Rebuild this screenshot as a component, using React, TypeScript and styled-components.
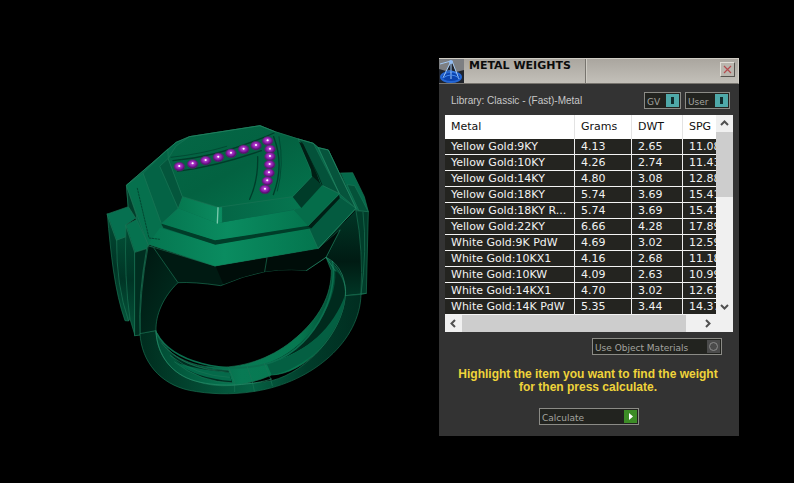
import React from "react";
import styled, { createGlobalStyle } from "styled-components";

const GlobalStyle = createGlobalStyle`
  * { box-sizing: border-box; }
  body { margin: 0; background: #000; font-family: "DejaVu Sans", Verdana, sans-serif; font-size: 11px; }
`;

const Screen = styled.main`
  display: grid;
  grid-template-columns: minmax(0, 1fr) minmax(280px, 300px);
  align-items: start;
  min-height: 100vh;
  padding: 58px 55px 47px 0;
  background: #000;
`;

const Viewport = styled.section`
  display: flex;
  justify-content: center;
  padding: 57px 0 0 36px;
`;

const RingDrawing = styled.svg`
  display: block;
  width: 275px;
  max-width: 100%;
  height: auto;
`;

const Panel = styled.section`
  display: flex;
  flex-direction: column;
  background: #333;
`;

const TitleBar = styled.header`
  display: flex;
  height: 26px;
  border: 1px solid #cfccc4;
  border-bottom-color: #77746e;
  border-left: 0;
  background: linear-gradient(#aaa69f, #c3c0b9);
`;

const Logo = styled.svg`
  flex: none;
  width: 25px;
  height: 24px;
`;

const Title = styled.h1`
  flex: none;
  width: 122px;
  margin: 0;
  padding-left: 5px;
  border-right: 1px solid #77746e;
  color: #0c0c0c;
  font-size: 11px;
  font-weight: bold;
  line-height: 13px;
  white-space: nowrap;
`;

const TitleSpace = styled.div`
  display: flex;
  flex: 1;
  align-items: center;
  justify-content: flex-end;
  padding: 0 3px 3px 0;
  border-left: 1px solid #cfccc4;
`;

const CloseButton = styled.button`
  display: grid;
  place-items: center;
  width: 15px;
  height: 15px;
  padding: 0;
  border: 1px solid;
  border-color: #e2dfd8 #57544f #57544f #e2dfd8;
  background: #bab6ae;
`;

const LibraryRow = styled.div`
  display: flex;
  align-items: center;
  gap: 4px;
  padding: 8px 9px 6px 12px;
`;

const Library = styled.span`
  flex: 1;
  color: #c8c8c8;
  font: 10px/16px "Liberation Sans", Arial, sans-serif;
  white-space: nowrap;
`;

const Option = styled.label<{ $width: number }>`
  display: flex;
  align-items: center;
  justify-content: space-between;
  width: ${(p) => p.$width}px;
  height: 17px;
  padding: 0 1px 0 2px;
  border: 1px solid #8b8b86;
  background: #22231f;
  color: #a3a39f;
  font-size: 9px;
  white-space: nowrap;
`;

const ControlText = styled.span`
  padding-top: 2px;
`;

const Tick = styled.input`
  display: grid;
  place-items: center;
  flex: none;
  appearance: none;
  width: 13px;
  height: 13px;
  margin: 0;
  background: #4b4b4b;

  &::before {
    content: "";
    width: 7px;
    height: 7px;
    border: 1px solid #8b8b8b;
    border-radius: 50%;
  }

  &:checked {
    background: #4fa9a9;
  }

  &:checked::before {
    width: 3px;
    height: 7px;
    border: 0;
    border-radius: 0;
    background: #102c2c;
  }
`;

const ListBox = styled.div`
  display: grid;
  grid-template-columns: minmax(0, 1fr) 17px;
  margin: 0 6px;
  background: #f0f0f0;
`;

const TableClip = styled.div`
  overflow: hidden;
`;

const Table = styled.table`
  width: 100%;
  table-layout: fixed;
  border-collapse: separate;
  border-spacing: 0;
  color: #f2f2f2;
  font-size: 11px;
`;

const HeadCell = styled.th<{ $width?: number }>`
  width: ${(p) => (p.$width ? `${p.$width}px` : "auto")};
  height: 24px;
  padding: 0 0 0 6px;
  border-right: 1px solid #e3e3e3;
  background: #fff;
  color: #111;
  font-weight: normal;
  line-height: 16px;
  text-align: left;

  &:last-child {
    border-right: 0;
  }
`;

const Cell = styled.td`
  height: 16px;
  padding: 1px 0 0 6px;
  border-right: 1px solid #eee;
  border-bottom: 1px solid #f4f4f4;
  background: #242420;
  line-height: 14px;
  white-space: nowrap;
  overflow: hidden;

  &:last-child {
    border-right: 0;
  }
`;

const VerticalBar = styled.div`
  display: grid;
  grid-template-rows: 17px 65px 1fr 17px;
`;

const HorizontalBar = styled.div`
  display: grid;
  grid-column: 1 / -1;
  grid-template-columns: 17px minmax(0, 1fr) 13px 17px 17px;
  height: 17px;
`;

const Thumb = styled.div`
  background: #cdcdcd;
`;

const ArrowButton = styled.button`
  display: grid;
  place-items: center;
  padding: 0;
  border: 0;
  background: transparent;
`;

const MaterialsRow = styled.div`
  display: flex;
  justify-content: flex-end;
  padding: 6px 17px 0;
`;

const Hint = styled.p`
  margin: 13px 0 12px;
  padding: 0 16px 0 14px;
  color: #efd43a;
  font: bold 12px/13px "Liberation Sans", Arial, sans-serif;
  text-align: center;
`;

const CalculateButton = styled.button`
  display: flex;
  align-items: center;
  justify-content: space-between;
  align-self: center;
  width: 100px;
  height: 17px;
  margin: 2px 0 11px;
  padding: 0 1px 0 2px;
  border: 1px solid #8b8b86;
  background: #22231f;
  color: #a3a39f;
  font: 9px "DejaVu Sans", Verdana, sans-serif;
`;

const metals = [
  ["Yellow Gold:9KY", "4.13", "2.65", "11.08"],
  ["Yellow Gold:10KY", "4.26", "2.74", "11.43"],
  ["Yellow Gold:14KY", "4.80", "3.08", "12.88"],
  ["Yellow Gold:18KY", "5.74", "3.69", "15.41"],
  ["Yellow Gold:18KY R...", "5.74", "3.69", "15.41"],
  ["Yellow Gold:22KY", "6.66", "4.28", "17.89"],
  ["White Gold:9K PdW", "4.69", "3.02", "12.59"],
  ["White Gold:10KX1", "4.16", "2.68", "11.18"],
  ["White Gold:10KW", "4.09", "2.63", "10.99"],
  ["White Gold:14KX1", "4.70", "3.02", "12.61"],
  ["White Gold:14K PdW", "5.35", "3.44", "14.37"],
];

const gems = [
  [238, 155], [278, 147], [317, 137], [355, 127], [393, 115], [431, 103], [468, 92],
  [503, 78], [510, 103], [510, 125], [509, 149], [507, 174], [502, 198], [495, 223],
];

const Chevron = ({ d }: { d: string }) => (
  <svg width="9" height="9" viewBox="0 0 9 9" fill="none" stroke="#505050" strokeWidth="2" aria-hidden="true">
    <path d={d} />
  </svg>
);

const Ring = () => (
  <RingDrawing viewBox="0 0 825 855" role="img" aria-label="Ring model">
    <defs>
      <linearGradient id="tableFace" x1="0" x2="1" y1="0" y2="1">
        <stop offset="0" stopColor="#046746" />
        <stop offset=".5" stopColor="#036241" />
        <stop offset="1" stopColor="#04754e" />
      </linearGradient>
      <linearGradient id="bevelFace" x1="0" x2="1">
        <stop offset="0" stopColor="#05784f" />
        <stop offset=".35" stopColor="#0b8b60" />
        <stop offset=".36" stopColor="#046646" />
        <stop offset="1" stopColor="#067650" />
      </linearGradient>
      <linearGradient id="lowerFace" x1="0" x2="1">
        <stop offset="0" stopColor="#057650" />
        <stop offset=".45" stopColor="#0a8c60" />
        <stop offset="1" stopColor="#04754e" />
      </linearGradient>
      <linearGradient id="leftLeg" x1="0" x2="1" y1="0" y2="1">
        <stop offset="0" stopColor="#00150f" />
        <stop offset="1" stopColor="#003021" />
      </linearGradient>
      <linearGradient id="rightLeg" x1="0" x2="0" y1="0" y2="1">
        <stop offset="0" stopColor="#013626" />
        <stop offset=".6" stopColor="#001b13" />
        <stop offset="1" stopColor="#003625" />
      </linearGradient>
      <linearGradient id="outerBand" x1="0" x2="1">
        <stop offset="0" stopColor="#002c1e" />
        <stop offset=".5" stopColor="#056143" />
        <stop offset=".75" stopColor="#013c2a" />
        <stop offset="1" stopColor="#002d20" />
      </linearGradient>
      <linearGradient id="innerBand" x1="0" x2="1">
        <stop offset="0" stopColor="#014c34" />
        <stop offset=".45" stopColor="#087a54" />
        <stop offset=".75" stopColor="#067850" />
        <stop offset="1" stopColor="#00402c" />
      </linearGradient>
      <linearGradient id="sideStep" x1="0" x2="0" y1="0" y2="1">
        <stop offset="0" stopColor="#024c34" />
        <stop offset=".5" stopColor="#003425" />
        <stop offset="1" stopColor="#05543a" />
      </linearGradient>
      <radialGradient id="gem" cx=".47" cy=".42" r=".6">
        <stop offset="0" stopColor="#f3b2ff" />
        <stop offset=".2" stopColor="#b640cf" />
        <stop offset=".6" stopColor="#811aa1" />
        <stop offset="1" stopColor="#390850" />
      </radialGradient>
    </defs>

    <g stroke="#1a7455" strokeWidth="2" strokeLinejoin="round" strokeLinecap="round">
      {/* right shoulder and leg */}
      <path fill="#05694a" d="M722 174L758 173L793 245L805 290L768 285Z" />
      <path fill="#045239" d="M742 209L764 212L805 290L778 288Z" />
      <path fill="url(#rightLeg)" stroke="none" d="M655 400L768 285L785 345L783 538L736 542Q730 475 678 427Z" />
      <path fill="#013d2a" d="M768 287L805 290L799 535L783 538Q790 405 768 287Z" />
      <path fill="none" d="M799 535L736 542M789 292Q802 405 783 538" />

      {/* underside of the head */}
      <path fill="#001a12" d="M145 392L345 453L655 400L720 345L678 427L620 466L575 464Q537 463 494 470Q430 482 362 512Q280 500 234 503Z" />
      <path fill="#000d09" stroke="none" d="M347 454L655 400L720 345L678 427L620 466L575 464Q537 463 494 470Q430 482 370 508Z" />
      <path fill="none" d="M501 428L494 470M678 427L720 345" />

      {/* left leg */}
      <path fill="url(#leftLeg)" d="M142 392L160 397L234 503C190 545 166 600 168 648L105 662Z" />
      <path fill="none" d="M145 390Q118 535 120 660" />

      {/* stepped left shoulder */}
      <path fill="url(#sideStep)" d="M22 297L50 375Q54 520 86 618L75 617C44 530 32 414 22 297Z" />
      <path fill="url(#sideStep)" d="M50 375L80 364Q78 500 90 610L86 618Q48 511 50 375Z" />
      <path fill="#067050" d="M22 297L85 275L112 306L78 329L80 364L50 375Z" />
      <path fill="url(#sideStep)" d="M78 330L105 412L105 662L90 612Q72 492 78 330Z" />
      <path fill="#06724f" d="M78 330L113 311L145 388L140 401L105 412Z" />
      <path fill="#002e20" d="M105 412L140 401Q114 541 120 660L105 662Z" />

      {/* outer face of the band */}
      <path fill="url(#outerBand)" d="M120 657C125 740 180 807 268 826C325 837 391 841 465 829C641 801 780 676 783 538L736 542C728 650 623 770 515 797C371 824 180 795 168 648Z" />

      {/* inner face of the band */}
      <path fill="url(#innerBand)" d="M168 650C185 710 259 751 335 756C427 762 512 729 575 679C661 610 694 540 694 467L678 427C718 455 742 508 736 542C725 665 610 777 515 780Q390 834 286 798C211 776 170 717 168 650Z" />
      <path fill="#002a1d" stroke="none" d="M706 467C713 570 620 704 499 746C627 712 721 622 735 540C737 511 723 475 706 467Z" />
      <path fill="#045f42" stroke="none" d="M500 746C620 718 703 633 735 540C728 663 608 766 515 780Z" />
      <path fill="none" stroke="#0b6e4e" strokeWidth="5" d="M697 440C717 546 636 714 493 748C375 777 218 743 170 655" />
      <path fill="#002d20" stroke="none" d="M205 705C245 744 302 761 385 766L397 803C307 800 245 766 205 705Z" />
      <path fill="#056a4a" stroke="none" d="M232 744Q291 764 389 773L394 798Q288 790 232 744Z" />
      <path fill="none" d="M170 653C210 737 290 766 386 766M185 684Q242 763 390 772M211 722Q287 782 388 787M224 741Q300 802 400 804M386 758L404 802L404 830M441 753L457 800L463 828M493 745L512 792L517 812" />
      <path fill="none" stroke="#258d69" d="M168 648C171 722 218 780 286 798C365 820 460 809 515 792M678 427L706 468M620 466L678 427Q711 442 727 480Q739 515 736 542" />

      {/* base tier */}
      <path fill="#05694a" d="M80 210L228 82L268 65L480 32L525 50L595 72L640 85L655 98L685 105L768 280L655 400L345 453L145 388L108 311L85 275Z" />
      <path fill="#023e2b" d="M80 213L110 303L108 311L85 275Z" />
      <path fill="#06704d" d="M80 210L130 174L188 328L180 373L145 388Z" />
      <path fill="url(#lowerFace)" stroke="none" d="M180 338L346 388L628 340L655 400L345 453L145 388Z" />
      <path fill="#045b40" d="M628 340L720 246L768 280L655 400Z" />
      <path fill="#06543c" d="M655 98L685 105L768 280L718 236Z" />
      <path fill="#003d29" stroke="none" d="M182 323L345 375L625 330L717 240L719 250L634 340L346 389L190 338Z" />
      <path fill="#001f15" stroke="none" d="M622 333L717 240L719 250L634 340Z" />

      {/* middle tier */}
      <path fill="#046345" d="M130 174L203 102L205 130L248 245L235 280L185 326Z" />
      <path fill="#04563c" d="M180 153L205 130L248 245L235 280Z" />
      <path fill="url(#lowerFace)" stroke="none" d="M235 280L352 325L582 285L625 332L345 376L185 326Z" />
      <path fill="#056d4a" stroke="none" d="M582 285L666 211L718 236L625 332Z" />
      <path fill="#04523a" d="M595 72L640 85L718 236L666 211Z" />
      <path fill="none" d="M582 285L666 211L718 236L625 332" />
      <path fill="none" stroke="#002a1c" strokeWidth="3" d="M605 82L654 180L666 210" />

      {/* top bevel and table */}
      <path fill="url(#bevelFace)" stroke="none" d="M248 245L355 277L578 245L604 279L352 325L235 280Z" />
      <path fill="#003c29" stroke="none" d="M578 245L636 184L666 211L604 279Z" />
      <path fill="url(#tableFace)" d="M205 130L228 93L268 65L480 32L525 50L595 72L638 182L578 245L355 277L248 245Z" />
      <path fill="#001e14" stroke="none" d="M597 80L610 88L650 176L662 208L636 184L633 164Z" />
      <path fill="none" stroke="#7ac9ad" strokeWidth="4" d="M354 278L352 324" />
      <path fill="none" stroke="#248865" d="M80 210L228 82L268 65L480 32L525 50M595 72L640 85L655 98L685 105L768 280L655 400M655 98L718 236" />
      <path fill="none" stroke="#003422" strokeDasharray="5 4" d="M112 220L147 369L180 373" />

      {/* numeral channel */}
      <g fill="none" stroke="#003d2a">
        <path strokeWidth="4" d="M219 137C310 129 421 99 522 54M233 169C325 157 407 134 484 107M521 65Q554 151 520 239M473 125Q475 196 449 253" />
        <path strokeWidth="2" d="M537 65Q553 150 532 228M213 127Q305 117 380 94" />
      </g>
    </g>
    {gems.map(([x, y]) => (
      <ellipse key={`${x}-${y}`} cx={x} cy={y} rx="16" ry="13" fill="url(#gem)" stroke="#52306a" strokeWidth="2" />
    ))}
    {gems.map(([x, y]) => (
      <circle key={`${x}-${y}`} cx={x} cy={y - 2} r="3" fill="#fff" />
    ))}
  </RingDrawing>
);

export default function App() {
  return (
    <>
      <GlobalStyle />
      <Screen>
        <Viewport>
          <Ring />
        </Viewport>
        <Panel>
          <TitleBar>
            <Logo viewBox="0 0 25 24" aria-hidden="true">
              <path fill="#20242c" d="M0 0H25V24H0Z" />
              <path fill="#7d7f82" d="M0 0H25V11L17 13L13 3L7 12L0 10Z" />
              <ellipse cx="12" cy="18" rx="10" ry="5" fill="#0b43ad" stroke="#2466d4" strokeWidth="2" />
              <path d="M12 2L4 19M13 2L20 20M12 2L12 20M1 5L12 2" fill="none" stroke="#a4caf4" />
              <path d="M6 13Q11 10 17 14M4 19Q12 13 20 19" fill="none" stroke="#4388ef" />
              <circle cx="12" cy="3" r="2" fill="#91baf0" />
            </Logo>
            <Title>METAL WEIGHTS</Title>
            <TitleSpace>
              <CloseButton aria-label="Close">
                <svg width="9" height="9" viewBox="0 0 9 9" stroke="#b64a4e" strokeWidth="1.2" aria-hidden="true">
                  <path d="M1 1L8 8M8 1L1 8" />
                </svg>
              </CloseButton>
            </TitleSpace>
          </TitleBar>
          <LibraryRow>
            <Library>Library: Classic - (Fast)-Metal</Library>
            <Option $width={37}><ControlText>GV</ControlText><Tick type="checkbox" defaultChecked /></Option>
            <Option $width={45}><ControlText>User</ControlText><Tick type="checkbox" defaultChecked /></Option>
          </LibraryRow>
          <ListBox>
            <TableClip>
              <Table>
                <thead>
                  <tr>
                    <HeadCell $width={130}>Metal</HeadCell>
                    <HeadCell $width={57}>Grams</HeadCell>
                    <HeadCell $width={51}>DWT</HeadCell>
                    <HeadCell>SPG</HeadCell>
                  </tr>
                </thead>
                <tbody>
                  {metals.map((row) => (
                    <tr key={row[0]}>
                      {row.map((value, i) => <Cell key={i}>{value}</Cell>)}
                    </tr>
                  ))}
                </tbody>
              </Table>
            </TableClip>
            <VerticalBar>
              <ArrowButton aria-label="Scroll up"><Chevron d="M1 6L4.500 2.500L8 6" /></ArrowButton>
              <Thumb />
              <span />
              <ArrowButton aria-label="Scroll down"><Chevron d="M1 3L4.500 6.500L8 3" /></ArrowButton>
            </VerticalBar>
            <HorizontalBar>
              <ArrowButton aria-label="Scroll left"><Chevron d="M6 1L2.500 4.500L6 8" /></ArrowButton>
              <Thumb />
              <span />
              <ArrowButton aria-label="Scroll right"><Chevron d="M3 1L6.500 4.500L3 8" /></ArrowButton>
            </HorizontalBar>
          </ListBox>
          <MaterialsRow>
            <Option $width={130}><ControlText>Use Object Materials</ControlText><Tick type="checkbox" /></Option>
          </MaterialsRow>
          <Hint>Highlight the item you want to find the weight for then press calculate.</Hint>
          <CalculateButton>
            <ControlText>Calculate</ControlText>
            <svg width="13" height="13" viewBox="0 0 13 13" aria-hidden="true">
              <path fill="#3c8c26" d="M0 0H13V13H0Z" />
              <path fill="#fff" d="M5 3L9 6.500L5 10Z" />
            </svg>
          </CalculateButton>
        </Panel>
      </Screen>
    </>
  );
}
